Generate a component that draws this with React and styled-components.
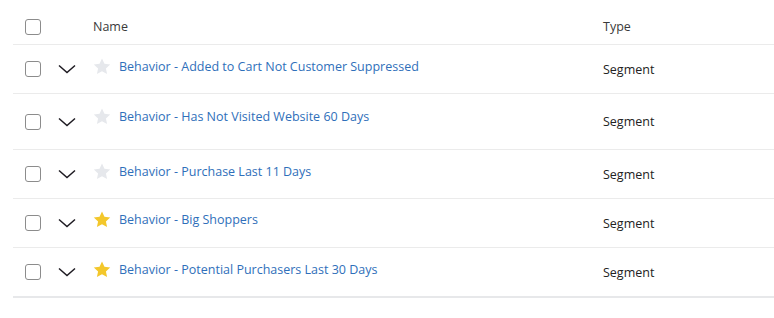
import React from "react";
import styled, { createGlobalStyle } from "styled-components";

const GlobalStyle = createGlobalStyle`
  body {
    margin: 0;
    background: #fff;
    font-family: "Open Sans", "Noto Sans", sans-serif;
  }
  * {
    box-sizing: border-box;
  }
`;

const Table = styled.div`
  margin-left: 13px;
  width: 761px;
  border-bottom: 2px solid #e7e8ea;
`;

const Row = styled.div`
  display: grid;
  grid-template-columns: 40px 40px 510px 1fr;
  align-items: center;
  height: ${(props) => props.height}px;
  border-bottom: ${(props) => (props.last ? "none" : "1px solid #ebebeb")};
`;

const CheckCell = styled.div`
  padding-left: 12px;
  display: flex;
  align-items: center;
`;

const Checkbox = styled.span`
  display: block;
  width: 16px;
  height: 16px;
  border: 1px solid #8c8c8c;
  border-radius: 3px;
  background: #fff;
  margin-top: ${(props) => (props.header ? 9 : 0)}px;
`;

const ToggleCell = styled.div`
  padding-left: 5px;
  display: flex;
  align-items: center;
`;

const HeaderLabel = styled.div`
  font-size: 12.5px;
  color: #3a3a3a;
  margin-top: 8px;
`;

const NameCell = styled.div`
  display: flex;
  align-items: center;
  gap: 8px;
  margin-top: ${(props) => -props.lift * 2}px;
`;

const NameLink = styled.a`
  font-size: 12.5px;
  color: #2f6fba;
  text-decoration: none;
  white-space: nowrap;
`;

const TypeText = styled.div`
  font-size: 12.5px;
  color: #222;
`;

const Chevron = () => (
  <svg width="18" height="10" viewBox="0 0 18 10">
    <path d="M1 1.5 L9 8.5 L17 1.5" fill="none" stroke="#1e1b22" strokeWidth="1.5" />
  </svg>
);

const Star = ({ active }) => (
  <svg width="18" height="17" viewBox="0 0 24 23">
    <path
      d="M12 0.8l3.3 7.1 7.8.9-5.8 5.3 1.6 7.7L12 17.9l-6.9 3.9 1.6-7.7L.9 8.8l7.8-.9z"
      fill={active ? "#f3c72b" : "#e6e8ec"}
    />
  </svg>
);

const rows = [
  { name: "Behavior - Added to Cart Not Customer Suppressed", starred: false, height: 49, lift: 3 },
  { name: "Behavior - Has Not Visited Website 60 Days", starred: false, height: 56, lift: 5 },
  { name: "Behavior - Purchase Last 11 Days", starred: false, height: 49, lift: 3 },
  { name: "Behavior - Big Shoppers", starred: true, height: 49, lift: 4 },
  { name: "Behavior - Potential Purchasers Last 30 Days", starred: true, height: 48, lift: 3 },
];

export default function App() {
  return (
    <>
      <GlobalStyle />
      <Table>
        <Row height={45}>
          <CheckCell>
            <Checkbox header />
          </CheckCell>
          <div />
          <HeaderLabel>Name</HeaderLabel>
          <HeaderLabel>Type</HeaderLabel>
        </Row>
        {rows.map((row, i) => (
          <Row key={row.name} height={row.height} last={i === rows.length - 1}>
            <CheckCell>
              <Checkbox />
            </CheckCell>
            <ToggleCell>
              <Chevron />
            </ToggleCell>
            <NameCell lift={row.lift}>
              <Star active={row.starred} />
              <NameLink href="#">{row.name}</NameLink>
            </NameCell>
            <TypeText>Segment</TypeText>
          </Row>
        ))}
      </Table>
    </>
  );
}
